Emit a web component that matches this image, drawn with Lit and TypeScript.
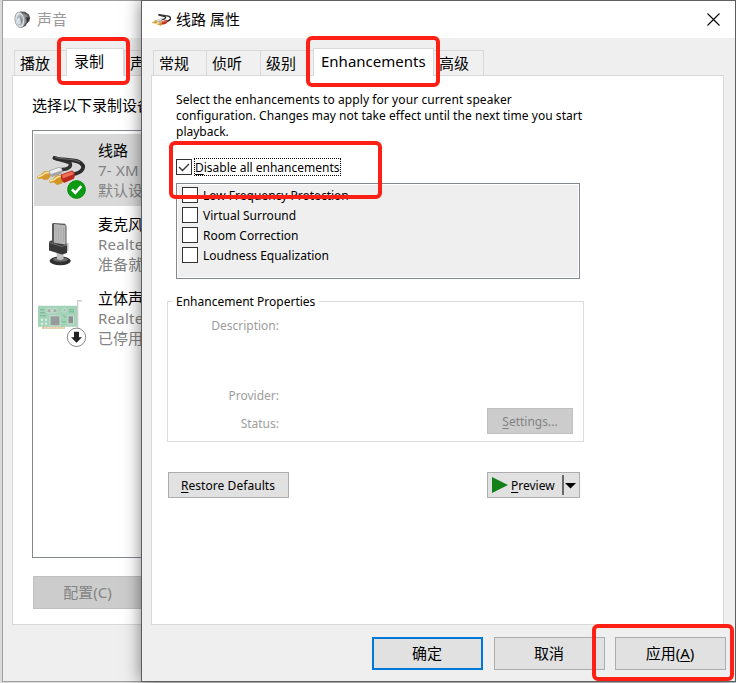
import { LitElement, html, css, svg } from "lit";
import { customElement } from "lit/decorators.js";

const speaker = html`<svg class="icon" width="18" height="18" viewBox="0 0 18 18">
  <path d="M6 .5 11 .8 15 3.5 16 6.5 15.5 10 13 12.5 11.5 15 7 17Z" fill="#555"/>
  <path d="M9 2 13 4 14.5 8 11 13Z" fill="#8a8a8a"/>
  <path d="M12 6 16 7 13 12Z" fill="#333"/>
  <ellipse cx="5.8" cy="8.8" rx="4.8" ry="7.8" transform="rotate(-8 5.8 8.8)" fill="#dfe3e5" stroke="#9ba0a3" stroke-width=".9"/>
  <ellipse cx="6" cy="9" rx="3.3" ry="5.6" fill="#a8b2b8"/>
  <ellipse cx="5" cy="10" rx="2" ry="3.2" fill="#d4e0e8"/>
  <path d="M6 5 8.5 9 7 13Z" fill="#7c868c"/>
</svg>`;

const cableArt = svg`
  <path d="M17.5 4C22 6 30 7 33 9Q35 13 29 15L22 16" fill="none" stroke="#333" stroke-width="3.6" stroke-linecap="round"/>
  <path d="M17.5 4C24 6.5 36 5 42 8 49 12 47 18 36 20.5" fill="none" stroke="#2d2d2d" stroke-width="3.8" stroke-linecap="round"/>
  <path d="M18 3.2C25 6 36 4 43 8" fill="none" stroke="#707070" stroke-width=".9"/>
  <path d="M0 22.6 4 20.5 7 17.5 12 17 14 22 11 25.6 7 26 5 24.6 1 25Z" fill="#d49a2d"/>
  <path d="M1 23 5 21.5 8.5 19 12 18.5" stroke="#ffeaa0" stroke-width="1.4" fill="none"/>
  <path d="M12 16.5 22 13C26 13 26.5 18 24 20L15 23Q11 20 12 16.5Z" fill="#a5a5a8"/>
  <path d="M12.5 17.3 22 13.8Q25 14.5 24.5 16.5L14 20Z" fill="#ededef"/>
  <path d="M12 26.6 16 25 19 21.5 24 21 27 26 25 29.5 20 31 17 28.6 13 29Z" fill="#d49528"/>
  <path d="M13 27 17 25.8 20.5 23 24 22.4" stroke="#ffeaa0" stroke-width="1.4" fill="none"/>
  <path d="M24 20.5 35 16.5C38.5 18 38.5 23 36.5 25L27 29Q23 25 24 20.5Z" fill="#ba2a1c"/>
  <path d="M24.7 21 35 17.5Q37 19 36.5 20.3L26 24.5Z" fill="#ec6e57"/>`;

const cables = html`<svg width="50" height="48" viewBox="0 0 50 48">
  ${cableArt}
  <circle cx="39.5" cy="35.5" r="10" fill="#e6eee4"/>
  <circle cx="39.5" cy="35.5" r="9" fill="#0b9a12" stroke="#087b0c" stroke-width=".8"/>
  <path d="m35 35.3 3.3 3.5 6-6.6" fill="none" stroke="#fff" stroke-width="2.6"/>
</svg>`;

const mic = html`<svg width="50" height="44" viewBox="0 0 50 44">
  <ellipse cx="23.2" cy="37.8" rx="10.6" ry="4.4" fill="#303030"/>
  <ellipse cx="23.5" cy="36.5" rx="7.5" ry="2.2" fill="#6d6d6d"/>
  <path d="M19.5 29H26.5V36Q23 38 20 36Z" fill="#c0c0c0"/>
  <path d="M26 22 31.5 19.5V27.5L27 30Z" fill="#bdbdbd"/>
  <path d="M12 19 14 17.5 29 21 30 23V30L25 31.5 12 27.5Z" fill="#383838"/>
  <path d="M15 1Q15 0 17 0L28 .8 29.5 3V22L15 20.5Z" fill="#585858"/>
  <path d="M17 1 28.5 2.2V21.5L17 19.5Z" fill="#bababa"/>
  <path d="M19 3V18M21.5 4V18.5M24 3V19M26.5 4V19" stroke="#a5a5a5" stroke-width=".7"/>
  <path d="M12 19.5 25 23.5 30 22" fill="none" stroke="#707070"/>
</svg>`;

const board = html`<svg width="50" height="54" viewBox="-1 -2.8 50 54">
  <path d="M39.7 32V3H44" fill="none" stroke="#cfcfcf" stroke-width="1.4"/>
  <path d="M0 8H39V29H27V31H4V29H0Z" fill="#a3d3b9"/>
  <path d="M4 29H27V31H4Z" fill="#e3c597"/>
  <path d="M7 29V31M10 29V31M13 29V31M16 29V31M19 29V31M22 29V31M25 29V31" stroke="#fff" stroke-width=".7"/>
  <rect x="12" y="18" width="10" height="10" fill="#969c99" stroke="#cbded3"/>
  <rect x="30" y="18" width="5.5" height="8" fill="#8b918e" stroke="#cbded3"/>
  <path d="M9 11h4v4H9zM15 11h4v4h-4zM25 11h3v3h-3z" fill="#a5aaa7" stroke="#cbded3"/>
  <path d="M2 12H6M2 15H7M2 18H8M25 17 28 20M24 24H28M31 12H36M31 14H36" stroke="#75b490"/>
  <path d="M3 21h2v2H3zM7 21h2v2H7zM3 25h2v2H3zM7 25h2v2H7z" fill="#e3eee7"/>
  <circle cx="38.5" cy="39.5" r="9.2" fill="#fff" stroke="#888"/>
  <path d="M36 34H41V39.5H44L38.5 45 33 39.5H36Z" fill="#222"/>
</svg>`;

@customElement("app-root")
export class AppRoot extends LitElement {
  static styles = css`
    :host { display: block; position: relative; width: 736px; height: 683px; overflow: hidden;
      background: #dadada; color: #000;
      font: 15px/20px "Noto Sans", "Noto Sans CJK SC", sans-serif; }
    * { box-sizing: border-box; }
    svg { display: block; flex: none; }
    .window { position: absolute; top: 0; height: 682px; background: #efefef; border: 1px solid #5e5e5e; display: flex; flex-direction: column; white-space: nowrap; }
    .back { left: 2px; width: 400px; border-color: #9f9f9f; }
    .front { left: 141px; width: 595px; box-shadow: 0 0 16px rgba(0,0,0,.5); }
    .title { height: 37px; flex: none; background: #fff; display: flex; align-items: center; padding: 0 15px 0 10px; }
    .title span { padding-bottom: 2px; }
    .back .title { color: #999; padding-left: 11px; }
    .icon { margin-right: 5px; }
    .grow { flex: 1; }
    .tabs { height: 37px; flex: none; display: flex; align-items: flex-end; padding-left: 11px; }
    .tab { height: 25px; border: 1px solid #d9d9d9; border-bottom: 0; border-right: 0; padding: 2px 0 0 5px; background: #f0f0f0; }
    .tab.sel { height: 28px; margin-bottom: -1px; border-right: 1px solid #d9d9d9; background: #fff; z-index: 1; padding: 2px 0 0 7px; }
    .w53 { width: 53px; } .w54 { width: 54px; }
    .w52 { width: 52px; } .w58 { width: 58px; }
    .wsel { width: 121px; }
    .last { width: 50px; border-left: 0; border-right: 1px solid #d9d9d9; }
    .panel { height: 550px; flex: none; margin: 0 11px 0 9px; background: #fff; border: 1px solid #d9d9d9; }
    .back .panel { padding: 19px 0 0 19px; }
    .list { margin-top: 15px; height: 428px; border: 1px solid #828790; padding: 3px 1px; }
    .device { height: 72px; margin-bottom: 2px; display: flex; padding: 6px 0 0 3px; }
    .device.on { background: #d9d9d9; }
    .pic { width: 61px; padding-top: 14px; }
    .pic.m { padding-top: 9px; } .pic.b { padding-top: 7px; }
    .lines { color: #838383; }
    .name { color: #000; }
    .driver { letter-spacing: .25px; }
    .btn { display: flex; align-items: center; justify-content: center; background: #e1e1e1; border: 1px solid #adadad; }
    .off { background: #ccc; border-color: #bfbfbf; color: #838383; }
    .config { width: 109px; height: 33px; margin: 18px 0 0 1px; padding-bottom: 2px; }
    .front .panel { padding: 16px 139px 0 15px; font: 12px/16px "Noto Sans", sans-serif; }
    .para { margin-left: 9px; }
    .l1 { letter-spacing: .085px; }
    .l2 { letter-spacing: .05px; }
    .row { display: flex; align-items: center; }
    .disable { margin: 18px 0 0 9px; height: 18px; }
    .box { width: 16px; height: 16px; flex: none; border: 1px solid #333; background: #fff; }
    .focus { margin-left: 2px; height: 18px; width: 147px; border: 1px dotted #000; line-height: 17px; }
    .effects { margin: 7px 0 0 9px; width: 404px; height: 96px; border: 1px solid #828790; background: #efefef; padding: 1px 5px; box-shadow: inset 0 0 0 1px #fff; }
    .effects .row { height: 20px; gap: 5px; }
    .effects .row span { padding-top: 1px; }
    .group { margin: 14px 0 0; padding: 0; height: 149px; width: 417px; }
    .legend { display: flex; align-items: center; height: 17px; }
    .legend::before { content: ""; width: 6px; height: 1px; background: #dcdcdc; }
    .legend::after { content: ""; flex: 1; height: 1px; background: #dcdcdc; margin-left: 2px; }
    .legend span { margin-left: 3px; width: 141px; }
    .body { margin-top: -8px; height: 140px; border: 1px solid #dcdcdc; border-top: 0; color: #9d9d9d; position: relative; display: grid; grid-template-columns: 111px 1fr; grid-template-rows: 70px 28px 24px; text-align: right; padding-top: 16px; }
    .settings { position: absolute; right: 10px; bottom: 7px; width: 86px; height: 26px; padding-top: 2px; }
    .actions { display: flex; justify-content: space-between; width: 412px; margin: 30px 0 0 1px; }
    .restore { width: 121px; height: 26px; padding: 2px 1px 0 0; letter-spacing: .06px; }
    .preview { width: 93px; height: 26px; justify-content: flex-start; padding-left: 4px; }
    .preview span.lbl { margin-left: 3px; width: 49px; padding-top: 2px; margin-right: 1px; }
    .mn { text-decoration: underline; text-underline-offset: 2px; text-decoration-thickness: 1px; }
    .foot { display: flex; padding: 12px 9px 0; justify-content: flex-end; }
    .foot .btn { width: 111px; height: 33px; padding: 0 1px 2px 0; }
    .foot .ok { border: 2px solid #0078d7; margin-right: 11px; }
    .foot .apply { margin-left: 10px; }
    .mark { position: absolute; border: 4px solid #ff2015; border-radius: 6px; z-index: 3; }
    .m1 { left: 57px; top: 37px; width: 73px; height: 48px; }
    .m2 { left: 306px; top: 36px; width: 134px; height: 51px; }
    .m3 { left: 169px; top: 141px; width: 213px; height: 58px; }
    .m4 { left: 592px; top: 624px; width: 142px; height: 57px; }
  `;

  render() {
    return html`
      <div class="window back">
        <div class="title">${speaker}<span>声音</span></div>
        <div class="tabs">
          <div class="tab w52">播放</div><div class="tab sel w58">录制</div><div class="tab w53">声音</div>
        </div>
        <div class="panel">
          <div>选择以下录制设备来修改设置:</div>
          <div class="list">
            ${this.device("on", "", cables, "线路", "7- XM", "默认设备")}
            ${this.device("", "m", mic, "麦克风", "Realtek", "准备就绪")}
            ${this.device("", "b", board, "立体声", "Realtek", "已停用")}
          </div>
          <div class="btn off config">配置(C)</div>
        </div>
      </div>
      <div class="window front">
        <div class="title">
          <svg class="icon" width="19" height="14" viewBox="0 0 47 34">${cableArt}</svg>
          <span>线路 属性</span><span class="grow"></span>
          <svg width="13" height="13" viewBox="0 0 13 13"><path d="m.5.5 12 12m0-12-12 12" stroke="#000" stroke-width="1.1"/></svg>
        </div>
        <div class="tabs">
          <div class="tab w53">常规</div><div class="tab w54">侦听</div><div class="tab w53">级别</div>
          <div class="tab sel wsel">Enhancements</div><div class="tab last">高级</div>
        </div>
        <div class="panel">
          <div class="para">
            <div class="l1">Select the enhancements to apply for your current speaker</div>
            <div class="l2">configuration. Changes may not take effect until the next time you start</div>
            <div>playback.</div>
          </div>
          <div class="row disable">
            <div class="box"><svg width="14" height="14" viewBox="0 0 14 14"><path d="m2 7 3.5 3.5L12 4" fill="none" stroke="#333" stroke-width="1.4"/></svg></div>
            <div class="focus"><span class="mn">D</span>isable all enhancements</div>
          </div>
          <div class="effects">
            ${["Low Frequency Protection", "Virtual Surround", "Room Correction", "Loudness Equalization"].map(
              (t) => html`<div class="row"><div class="box"></div><span>${t}</span></div>`)}
          </div>
          <div class="group">
            <div class="legend"><span>Enhancement Properties</span></div>
            <div class="body">
              <div>Description:</div><div></div><div>Provider:</div><div></div><div>Status:</div>
              <div class="btn off settings"><span><span class="mn">S</span>ettings...</span></div>
            </div>
          </div>
          <div class="actions">
            <div class="btn restore"><span><span class="mn">R</span>estore Defaults</span></div>
            <div class="btn preview">
              <svg width="16" height="16" viewBox="0 0 16 16"><path d="M0 0 16 8 0 16Z" fill="#14801a"/></svg>
              <span class="lbl"><span class="mn">P</span>review</span>
              <svg width="15" height="20" viewBox="0 0 15 20"><path d="M2 0V20" stroke="#696969" stroke-width="2"/><path d="M4 8H15L9.5 13.5Z"/></svg>
            </div>
          </div>
        </div>
        <div class="foot">
          <div class="btn ok">确定</div><div class="btn">取消</div>
          <div class="btn apply"><span>应用(<span class="mn">A</span>)</span></div>
        </div>
      </div>
      <div class="mark m1"></div><div class="mark m2"></div><div class="mark m3"></div><div class="mark m4"></div>
    `;
  }

  private device(row: string, pic: string, icon: unknown, name: string, driver: string, state: string) {
    return html`<div class="device ${row}">
      <div class="pic ${pic}">${icon}</div>
      <div class="lines"><div class="name">${name}</div><div class="driver">${driver}</div><div>${state}</div></div>
    </div>`;
  }
}
